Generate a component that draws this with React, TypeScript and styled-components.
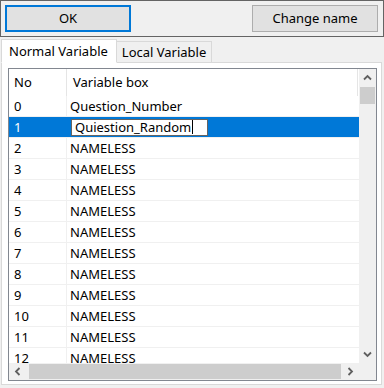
import React from 'react';
import styled, { createGlobalStyle } from 'styled-components';

const Global = createGlobalStyle`
  html, body {
    margin: 0;
    padding: 0;
    background: #f0f0f0;
  }
  body {
    font-family: "Noto Sans", "Noto Sans CJK JP", sans-serif;
    font-size: 12px;
    color: #000;
  }
`;

const Window = styled.div`
  width: 384px;
  height: 388px;
  display: flex;
  flex-direction: column;
  overflow: hidden;
`;

const TopBar = styled.div`
  height: 37px;
  box-sizing: border-box;
  border: 1px solid #646464;
  display: flex;
  align-items: flex-start;
  justify-content: space-between;
  padding: 4px 5px 0 4px;
`;

const Button = styled.div<{ $focused?: boolean }>`
  width: 126px;
  height: 27px;
  box-sizing: border-box;
  background: #e1e1e1;
  border: ${(p) => (p.$focused ? '2px solid #0078d7' : '1px solid #adadad')};
  display: flex;
  align-items: center;
  justify-content: center;
  font-size: 13px;
  padding-bottom: 1px;
`;

const TabStrip = styled.div`
  display: flex;
  align-items: flex-end;
  height: 24px;
  padding-left: 1px;
  margin-top: 1px;
`;

const Tab = styled.div<{ $active?: boolean }>`
  box-sizing: border-box;
  height: ${(p) => (p.$active ? '24px' : '22px')};
  padding: ${(p) => (p.$active ? '0 8px 1px 7px' : '0 5px 0 5px')};
  background: ${(p) => (p.$active ? '#ffffff' : '#f0f0f0')};
  border: 1px solid #d9d9d9;
  border-bottom: ${(p) => (p.$active ? '1px solid #ffffff' : '1px solid #d9d9d9')};
  ${(p) => (p.$active ? 'z-index: 1;' : 'border-left: none;')}
  margin-bottom: -1px;
  display: flex;
  align-items: center;
  font-size: 13px;
`;

const TabPage = styled.div`
  box-sizing: border-box;
  margin: 0 2px 0 1px;
  height: 323px;
  background: #ffffff;
  border: 1px solid #d9d9d9;
  padding: 5px 4px 4px 6px;
`;

const ListView = styled.div`
  box-sizing: border-box;
  height: 313px;
  border: 1px solid #828790;
  display: grid;
  grid-template-columns: 1fr 17px;
  grid-template-rows: 1fr 17px;
  background: #fff;
`;

const Body = styled.div`
  overflow: hidden;
  display: flex;
  flex-direction: column;
`;

const HeaderRow = styled.div`
  display: grid;
  grid-template-columns: 58px 291px;
  height: 27px;
  flex-shrink: 0;
`;

const HeaderCell = styled.div<{ $pad: number }>`
  display: flex;
  align-items: center;
  padding-left: ${(p) => p.$pad}px;
  padding-bottom: 2px;
  border-right: 1px solid #e5e5e5;
  font-size: 13px;
`;

const Row = styled.div<{ $selected?: boolean }>`
  display: grid;
  grid-template-columns: 58px 1fr;
  height: 21px;
  flex-shrink: 0;
  box-sizing: border-box;
  border-bottom: 1px solid #f0f0f0;
  background: ${(p) => (p.$selected ? '#0078d7' : 'transparent')};
  color: ${(p) => (p.$selected ? '#ffffff' : '#000000')};
  font-size: 13px;
`;

const Cell = styled.div<{ $pad: number; $line?: boolean }>`
  display: flex;
  align-items: center;
  padding-left: ${(p) => p.$pad}px;
  padding-bottom: 1px;
  border-right: ${(p) => (p.$line ? '1px solid #f0f0f0' : 'none')};
  white-space: nowrap;
`;

const EditBox = styled.div`
  box-sizing: border-box;
  width: 137px;
  height: 17px;
  margin-left: 1px;
  margin-top: 1px;
  background: #fff;
  border: 1px solid #646464;
  color: #000;
  display: flex;
  align-items: center;
  padding-left: 3px;
`;

const Caret = styled.span`
  display: inline-block;
  width: 1px;
  height: 14px;
  background: #000;
  margin-left: 1px;
`;

const VScroll = styled.div`
  background: #f0f0f0;
  display: flex;
  flex-direction: column;
  align-items: center;
`;

const HScroll = styled.div`
  background: #f0f0f0;
  display: flex;
  align-items: center;
`;

const Corner = styled.div`
  background: #f0f0f0;
`;

const ArrowBox = styled.div`
  width: 17px;
  height: 17px;
  flex-shrink: 0;
  display: flex;
  align-items: center;
  justify-content: center;
`;

const VThumb = styled.div`
  width: 15px;
  height: 17px;
  margin-top: 1px;
  background: #cdcdcd;
`;

const HThumb = styled.div`
  height: 15px;
  width: 312px;
  margin-left: 3px;
  background: #cdcdcd;
`;

const Spacer = styled.div`
  flex: 1;
`;

function Chevron({ dir }: { dir: 'up' | 'down' | 'left' | 'right' }) {
  const rot = { up: 0, right: 90, down: 180, left: 270 }[dir];
  return (
    <svg width="9" height="9" viewBox="0 0 9 9" style={{ transform: `rotate(${rot}deg)` }}>
      <path d="M1 6.5 L4.5 3 L8 6.5" fill="none" stroke="#606060" strokeWidth="1.8" />
    </svg>
  );
}

const names = [
  'Question_Number',
  'Quiestion_Random',
  'NAMELESS', 'NAMELESS', 'NAMELESS', 'NAMELESS', 'NAMELESS',
  'NAMELESS', 'NAMELESS', 'NAMELESS', 'NAMELESS', 'NAMELESS', 'NAMELESS',
];

export default function App() {
  return (
    <Window>
      <Global />
      <TopBar>
        <Button $focused>OK</Button>
        <Button>Change name</Button>
      </TopBar>
      <TabStrip>
        <Tab $active>Normal Variable</Tab>
        <Tab>Local Variable</Tab>
      </TabStrip>
      <TabPage>
        <ListView>
          <Body>
            <HeaderRow>
              <HeaderCell $pad={5}>No</HeaderCell>
              <HeaderCell $pad={6}>Variable box</HeaderCell>
            </HeaderRow>
            {names.map((n, i) => (
              <Row key={i} $selected={i === 1}>
                <Cell $pad={5} $line={i !== 1}>{i}</Cell>
                <Cell $pad={3}>
                  {i === 1 ? (
                    <EditBox>
                      {n}
                      <Caret />
                    </EditBox>
                  ) : (
                    n
                  )}
                </Cell>
              </Row>
            ))}
          </Body>
          <VScroll>
            <ArrowBox><Chevron dir="up" /></ArrowBox>
            <VThumb />
            <Spacer />
            <ArrowBox><Chevron dir="down" /></ArrowBox>
          </VScroll>
          <HScroll>
            <ArrowBox><Chevron dir="left" /></ArrowBox>
            <HThumb />
            <Spacer />
            <ArrowBox><Chevron dir="right" /></ArrowBox>
          </HScroll>
          <Corner />
        </ListView>
      </TabPage>
    </Window>
  );
}
